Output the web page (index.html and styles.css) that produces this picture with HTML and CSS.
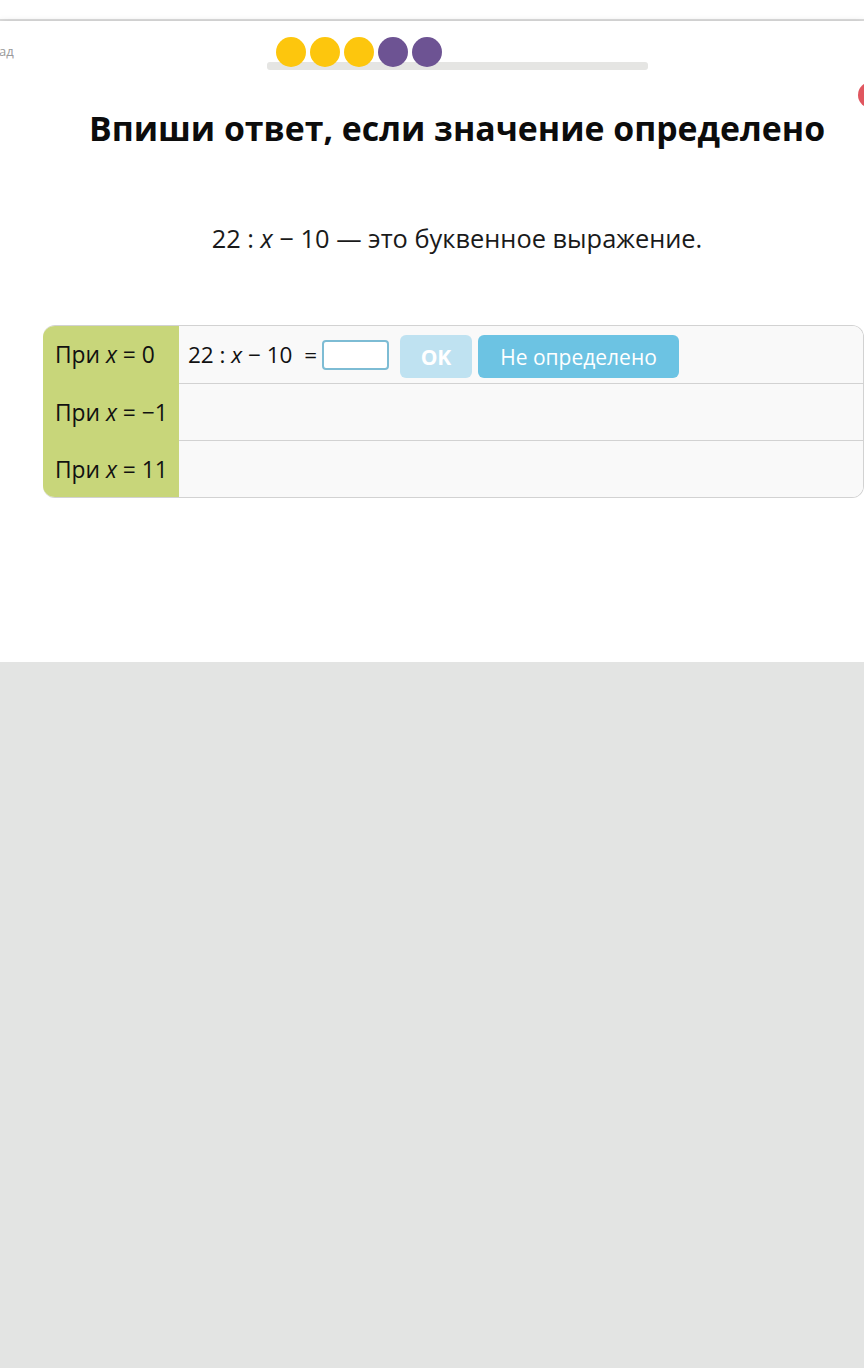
FILE: index.html
```html
<!DOCTYPE html>
<html lang="ru">
<head>
  <meta charset="UTF-8" />
  <meta name="viewport" content="width=device-width, initial-scale=1.0" />
  <title>Впиши ответ</title>
  <link rel="stylesheet" href="styles.css">
</head>
<body>
  <div class="top-strip"></div>

  <div class="card">
    <span class="hint-dot"></span>

    <div class="topbar">
      <a class="back">Назад</a>
      <div class="progress-wrap">
        <div class="progress">
          <div class="dots">
            <span class="dot done"></span>
            <span class="dot done"></span>
            <span class="dot done"></span>
            <span class="dot todo"></span>
            <span class="dot todo"></span>
          </div>
          <div class="track"></div>
        </div>
      </div>
    </div>

    <div class="content">
      <h1 class="task-title">Впиши ответ, если значение определено</h1>
      <p class="task-text">22 : <i>x</i> − 10 — это буквенное выражение.</p>

      <div class="answers">
        <div class="row">
          <div class="label"><span>При <i>x</i> = 0</span></div>
          <div class="cell">
            <span class="expr">22 : <i>x</i> − 10&nbsp; =</span>
            <input class="answer-input" type="text" />
            <button class="btn btn-ok">OK</button>
            <button class="btn btn-undef">Не определено</button>
          </div>
        </div>
        <div class="row">
          <div class="label"><span>При <i>x</i> = −1</span></div>
          <div class="cell"></div>
        </div>
        <div class="row">
          <div class="label"><span>При <i>x</i> = 11</span></div>
          <div class="cell"></div>
        </div>
      </div>
    </div>
  </div>
</body>
</html>
```

FILE: styles.css
```css
:root {
  --yellow: #fdc60d;
  --purple: #6d5393;
  --green: #c8d67a;
  --blue: #6cc3e3;
  --light-blue: #bfe2f1;
}

html, body {
  margin: 0;
  padding: 0;
  font-family: 'Open Sans', 'Noto Sans', sans-serif;
  background: #e3e4e3;
  color: #111;
  overflow-x: hidden;
}

.top-strip {
  height: 19px;
  background: #fff;
  border-bottom: 2px solid #dedede;
}

.card {
  position: relative;
  height: 641px;
  background: #fff;
  box-shadow: 0 1px 0 #9e9e9e, 0 3px 8px rgba(0, 0, 0, 0.3);
}

.hint-dot {
  position: absolute;
  top: 61px;
  left: 858px;
  width: 26px;
  height: 26px;
  border-radius: 50%;
  background: #e0565f;
}

.topbar {
  display: flex;
  align-items: flex-start;
  padding-top: 16px;
}

.back {
  width: 74px;
  margin-left: -24px;
  margin-top: 5px;
  font-size: 13px;
  line-height: 18px;
  color: #999;
}

.progress-wrap {
  flex: 1;
  display: flex;
  justify-content: center;
}

.progress {
  width: 381px;
}

.dots {
  position: relative;
  z-index: 1;
  display: flex;
  gap: 4px;
  padding-left: 9px;
}

.dot {
  width: 30px;
  height: 30px;
  border-radius: 50%;
}
.dot.done { background: var(--yellow); }
.dot.todo { background: var(--purple); }

.track {
  height: 8px;
  margin-top: -5px;
  border-radius: 3px;
  background: #e5e5e3;
}

.content {
  padding-left: 50px;
}

.task-title {
  margin: 38px 0 0;
  text-align: center;
  font-size: 33.8px;
  line-height: 40px;
  font-weight: 700;
  color: #0c0c0c;
}

.task-text {
  margin: 74px 0 0;
  text-align: center;
  font-size: 25.4px;
  line-height: 32px;
  color: #1a1a1a;
}

.answers {
  margin: 71px 0 0 -7px;
  border: 1px solid #d2d2d2;
  border-left: none;
  border-radius: 12px;
  overflow: hidden;
}

.row {
  display: flex;
  height: 57px;
}
.row + .row .cell {
  border-top: 1px solid #d2d2d2;
}
.row + .row .label {
  padding-top: 1px;
}

.label {
  flex: 0 0 124px;
  display: flex;
  align-items: center;
  padding-left: 12px;
  background: var(--green);
  font-size: 22.8px;
  white-space: nowrap;
}

.cell {
  flex: 1;
  display: flex;
  align-items: center;
  padding-left: 9px;
  background: #f9f9f9;
  font-size: 22.5px;
}

.expr {
  margin-right: 5px;
  white-space: pre;
}

.answer-input {
  box-sizing: border-box;
  width: 67px;
  height: 30px;
  margin: 0 11px 0 0;
  border: 2px solid #7dbcd4;
  border-radius: 4px;
  background: #fff;
}

.btn {
  height: 43px;
  border: none;
  border-radius: 6px;
  color: #fff;
  font-family: 'Open Sans', 'Noto Sans', sans-serif;
  font-size: 21px;
  cursor: pointer;
  margin-top: 4px;
}

.btn-ok {
  width: 72px;
  margin-right: 6px;
  background: var(--light-blue);
  font-weight: 700;
}

.btn-undef {
  width: 201px;
  background: var(--blue);
}
```
